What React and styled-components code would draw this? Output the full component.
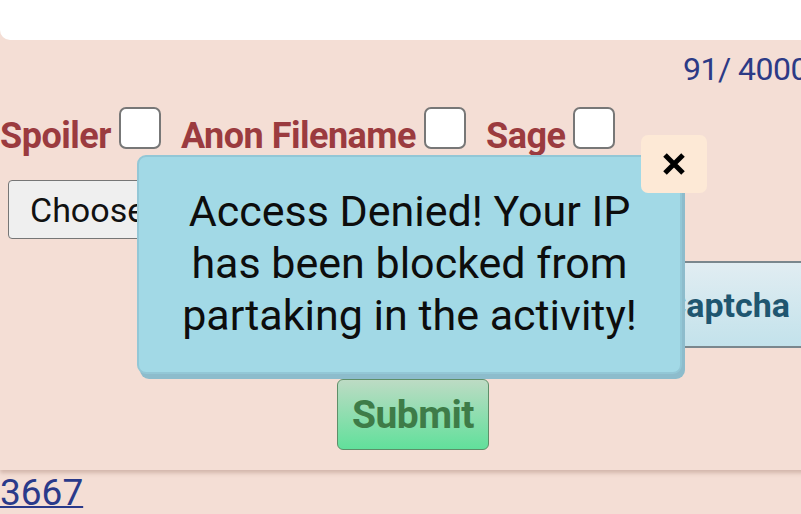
import React from 'react'
import styled, { createGlobalStyle } from 'styled-components'

const GlobalStyle = createGlobalStyle`
  html, body {
    margin: 0;
    padding: 0;
    background-color: #f4ded5;
    overflow: hidden;
    font-family: Roboto, "Liberation Sans", sans-serif;
  }
`

const Page = styled.div`
  width: 801px;
  height: 514px;
  overflow: hidden;
  position: relative;
`

const Form = styled.div`
  width: 820px;
  background-color: #f4ded5;
  padding-bottom: 20px;
  box-shadow: 0 3px 4px rgba(150, 110, 95, 0.35);
  display: flex;
  flex-direction: column;
`

const TextArea = styled.div`
  height: 40px;
  background-color: #fff;
  border-radius: 0 0 10px 10px;
`

const Counter = styled.div`
  margin-top: 12px;
  align-self: flex-end;
  padding-right: 12px;
  font-size: 32px;
  line-height: 34px;
  color: #2c3a86;
  letter-spacing: -0.5px;
`

const Options = styled.div`
  margin-top: 21px;
  display: flex;
  align-items: flex-end;
  gap: 20px;
`

const Option = styled.label`
  display: flex;
  align-items: flex-end;
  gap: 8px;
`

const OptionText = styled.span`
  font-size: 36px;
  line-height: 42px;
  font-weight: 700;
  color: #9b3b3f;
  letter-spacing: -0.5px;
`

const Check = styled.span`
  width: 38px;
  height: 38px;
  margin-bottom: 8px;
  background-color: #fff;
  border: 2px solid #777;
  border-radius: 7px;
`

const FileButton = styled.div`
  margin: 23px 0 0 8px;
  align-self: flex-start;
  height: 57px;
  padding: 0 21px;
  display: flex;
  align-items: center;
  background-color: #efefef;
  border: 1px solid #767676;
  border-radius: 4px;
  font-size: 34px;
  color: #111;
`

const CaptchaButton = styled.div`
  margin-top: 22px;
  align-self: flex-end;
  height: 83px;
  padding: 0 30px 0 60px;
  display: flex;
  align-items: center;
  background: linear-gradient(#e1edf2, #c3e2eb);
  border-top: 2px solid #7a878d;
  border-bottom: 2px solid #7a878d;
  font-size: 34px;
  font-weight: 700;
  color: #1f5670;
`

const SubmitButton = styled.div`
  margin: 31px 0 0 6px;
  align-self: center;
  width: 150px;
  height: 69px;
  display: flex;
  align-items: center;
  justify-content: center;
  background: linear-gradient(#bddbc4, #61e09b);
  border: 1px solid #5e8f69;
  border-radius: 6px;
  font-size: 39px;
  font-weight: 700;
  color: #3e7c48;
  letter-spacing: -0.5px;
`

const PostLink = styled.a`
  display: inline-block;
  margin-top: 3px;
  font-size: 37px;
  line-height: 40px;
  color: #2a3a8a;
  text-decoration: underline;
  text-decoration-thickness: 2px;
`

const Modal = styled.div`
  position: absolute;
  left: 137px;
  top: 155px;
  width: 545px;
  height: 219px;
  box-sizing: border-box;
  background-color: #a2d9e6;
  border: 2px solid #93c7d6;
  border-radius: 9px;
  box-shadow: 3px 5px 0 #8dbccc;
  display: flex;
  align-items: center;
  justify-content: center;
  text-align: center;
  font-size: 43px;
  line-height: 52px;
  color: #0d0d0d;
  padding: 0 30px 4px;
`

const CloseButton = styled.div`
  position: absolute;
  left: 641px;
  top: 135px;
  width: 66px;
  height: 58px;
  background-color: #fde9d6;
  border-radius: 7px;
  display: flex;
  align-items: center;
  justify-content: center;
`

const CloseIcon = () => (
  <svg width="24" height="22" viewBox="0 0 24 22">
    <path d="M3 2 L21 20 M21 2 L3 20" stroke="#000" strokeWidth="5" />
  </svg>
)

const App = () => {
  const options = ['Spoiler', 'Anon Filename', 'Sage']

  return (
    <Page>
      <GlobalStyle />
      <Form>
        <TextArea />
        <Counter>91/ 4000</Counter>
        <Options>
          {options.map((name) => (
            <Option key={name}>
              <OptionText>{name}</OptionText>
              <Check />
            </Option>
          ))}
        </Options>
        <FileButton>Choose File</FileButton>
        <CaptchaButton>Get Captcha</CaptchaButton>
        <SubmitButton>Submit</SubmitButton>
      </Form>
      <PostLink href="#">3667</PostLink>
      <Modal>Access Denied! Your IP has been blocked from partaking in the activity!</Modal>
      <CloseButton>
        <CloseIcon />
      </CloseButton>
    </Page>
  )
}

export default App
